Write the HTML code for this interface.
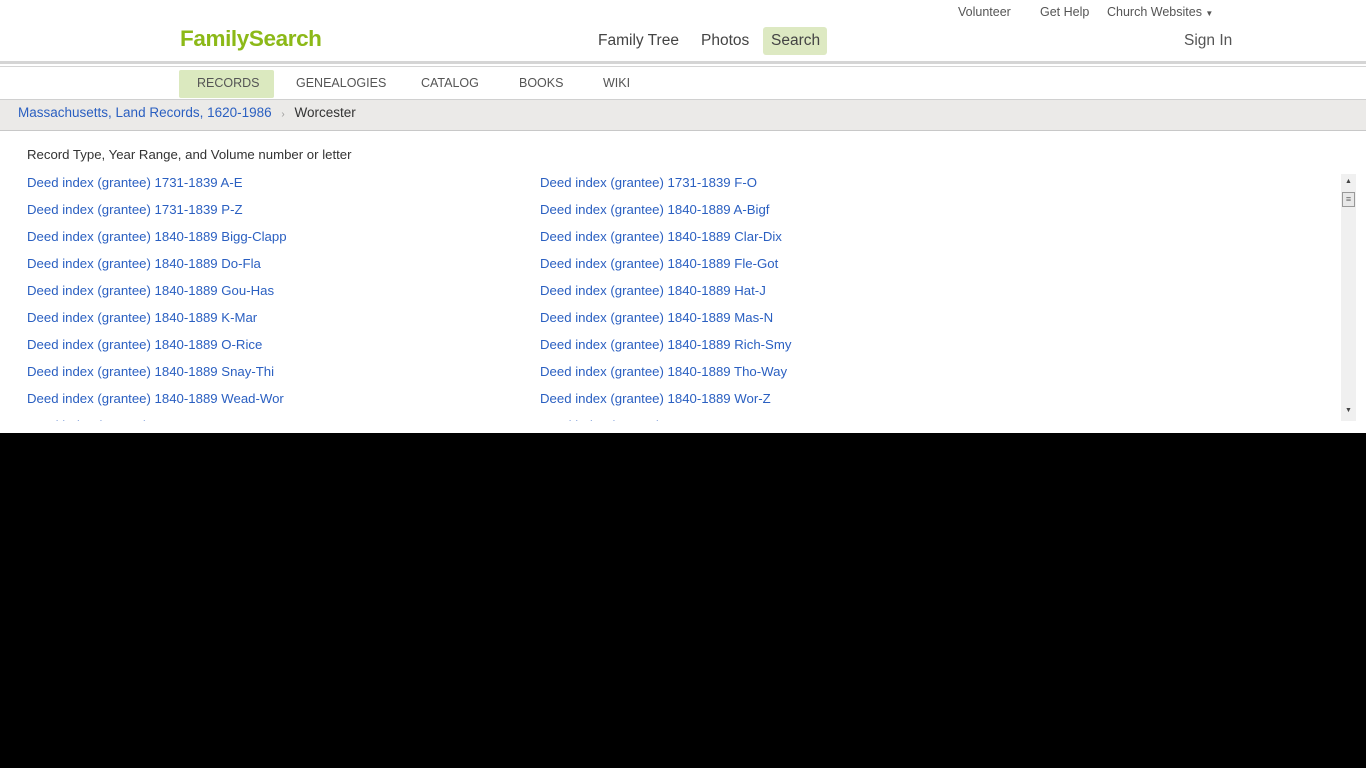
<!DOCTYPE html>
<html><head><style>
body{margin:0;width:1366px;height:768px;background:#000;font-family:"Liberation Sans",sans-serif;overflow:hidden;position:relative}
.page{position:absolute;left:0;top:0;width:1366px;height:433px;background:#fff;overflow:hidden}
.a{position:absolute;white-space:nowrap}
.top{font-size:12.5px;color:#555;top:5px}
.nav{font-size:15.5px;color:#444;top:32px}
.sub{font-size:12.5px;color:#555;top:76px}
a,.l{color:#2a5fc1;text-decoration:none}
.row{position:absolute;font-size:13.2px;color:#2a5fc1;white-space:nowrap}
</style></head><body>
<div class="page">
<div class="a top" style="left:958px">Volunteer</div>
<div class="a top" style="left:1040px">Get Help</div>
<div class="a top" style="left:1107px">Church Websites <span style="font-size:8px">▼</span></div>
<div class="a" style="left:180px;top:26px;font-size:22.5px;font-weight:bold;color:#8cb918;letter-spacing:-0.4px">FamilySearch</div>
<div class="a nav" style="left:598px">Family Tree</div>
<div class="a nav" style="left:701px">Photos</div>
<div class="a" style="left:763px;top:27px;width:64px;height:28px;background:#dde9c2;border-radius:3px"></div>
<div class="a nav" style="left:771px">Search</div>
<div class="a nav" style="left:1184px;color:#555">Sign In</div>
<div class="a" style="left:0;top:61px;width:1366px;height:3px;background:#d5d5d5"></div>
<div class="a" style="left:0;top:66px;width:1366px;height:1px;background:#d5d5d5"></div>
<div class="a" style="left:179px;top:70px;width:95px;height:28px;background:#dbe9bf;border-radius:2px"></div>
<div class="a sub" style="left:197px">RECORDS</div>
<div class="a sub" style="left:296px">GENEALOGIES</div>
<div class="a sub" style="left:421px">CATALOG</div>
<div class="a sub" style="left:519px">BOOKS</div>
<div class="a sub" style="left:603px">WIKI</div>
<div class="a" style="left:0;top:99px;width:1366px;height:30px;background:#ebeae8;border-top:1px solid #d0d0d0;border-bottom:1px solid #c8c8c8"></div>
<div class="a" style="left:18px;top:105px;font-size:13.5px;color:#333"><span class="l">Massachusetts, Land Records, 1620-1986</span> <span style="color:#999;font-size:10px;margin:0 6px">›</span> Worcester</div>
<div class="a" style="left:27px;top:147px;font-size:13.2px;color:#333">Record Type, Year Range, and Volume number or letter</div>
<div class="a" style="left:0;top:174px;width:1340px;height:247px;overflow:hidden">
<div class="row" style="left:27px;top:1px">Deed index (grantee) 1731-1839 A-E</div>
<div class="row" style="left:540px;top:1px">Deed index (grantee) 1731-1839 F-O</div>
<div class="row" style="left:27px;top:28px">Deed index (grantee) 1731-1839 P-Z</div>
<div class="row" style="left:540px;top:28px">Deed index (grantee) 1840-1889 A-Bigf</div>
<div class="row" style="left:27px;top:55px">Deed index (grantee) 1840-1889 Bigg-Clapp</div>
<div class="row" style="left:540px;top:55px">Deed index (grantee) 1840-1889 Clar-Dix</div>
<div class="row" style="left:27px;top:82px">Deed index (grantee) 1840-1889 Do-Fla</div>
<div class="row" style="left:540px;top:82px">Deed index (grantee) 1840-1889 Fle-Got</div>
<div class="row" style="left:27px;top:109px">Deed index (grantee) 1840-1889 Gou-Has</div>
<div class="row" style="left:540px;top:109px">Deed index (grantee) 1840-1889 Hat-J</div>
<div class="row" style="left:27px;top:136px">Deed index (grantee) 1840-1889 K-Mar</div>
<div class="row" style="left:540px;top:136px">Deed index (grantee) 1840-1889 Mas-N</div>
<div class="row" style="left:27px;top:163px">Deed index (grantee) 1840-1889 O-Rice</div>
<div class="row" style="left:540px;top:163px">Deed index (grantee) 1840-1889 Rich-Smy</div>
<div class="row" style="left:27px;top:190px">Deed index (grantee) 1840-1889 Snay-Thi</div>
<div class="row" style="left:540px;top:190px">Deed index (grantee) 1840-1889 Tho-Way</div>
<div class="row" style="left:27px;top:217px">Deed index (grantee) 1840-1889 Wead-Wor</div>
<div class="row" style="left:540px;top:217px">Deed index (grantee) 1840-1889 Wor-Z</div>
<div class="row" style="left:27px;top:244px">Deed index (grantor) 1731-1839 A-C</div>
<div class="row" style="left:540px;top:244px">Deed index (grantor) 1731-1839 D-J</div>
</div>
<div class="a" style="left:1341px;top:174px;width:15px;height:247px;background:#f0f0f0"></div>
<div class="a" style="left:1345px;top:178px;font-size:7px;color:#444">▲</div>
<div class="a" style="left:1342px;top:192px;width:11px;height:13px;border:1px solid #999;background:#e8e8e8;font-size:9px;line-height:12px;text-align:center;color:#666">≡</div>
<div class="a" style="left:1345px;top:407px;font-size:7px;color:#444">▼</div>
</div>
</body></html>
